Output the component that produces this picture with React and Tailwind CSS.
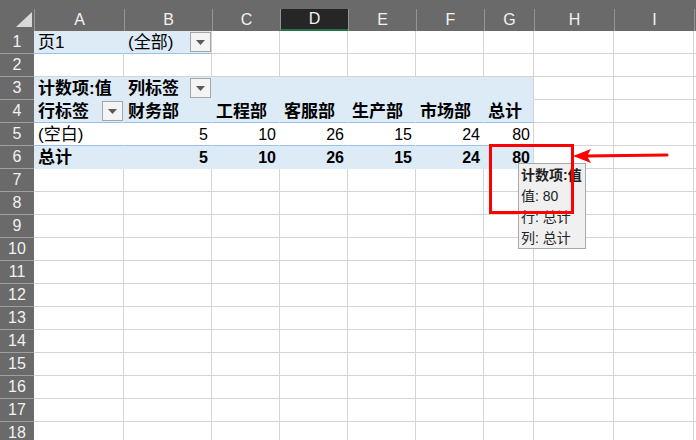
import React from "react";

// Columnas visibles de la hoja
const columns = ["A", "B", "C", "D", "E", "F", "G", "H", "I", ""];

const BG = { white: "bg-white", blue: "bg-[#ddebf7]" };
const RIGHT = { grid: "border-r-[#d4d4d4]", blue: "border-r-[#ddebf7]", white: "border-r-white" };
const BOTTOM = { grid: "border-b-[#d4d4d4]", line: "border-b-[#9bc2e6]", blue: "border-b-[#ddebf7]" };

// Contenido de la tabla dinámica
const cells = {
  "1-0": { text: "页1" },
  "1-1": { text: "(全部)", dropdown: true },
  "3-0": { text: "计数项:值", bold: true },
  "3-1": { text: "列标签", bold: true, dropdown: true },
  "4-0": { text: "行标签", bold: true, dropdown: true },
  "4-1": { text: "财务部", bold: true },
  "4-2": { text: "工程部", bold: true },
  "4-3": { text: "客服部", bold: true },
  "4-4": { text: "生产部", bold: true },
  "4-5": { text: "市场部", bold: true },
  "4-6": { text: "总计", bold: true },
  "5-0": { text: "(空白)" },
  "5-1": { text: "5", num: true },
  "5-2": { text: "10", num: true },
  "5-3": { text: "26", num: true },
  "5-4": { text: "15", num: true },
  "5-5": { text: "24", num: true },
  "5-6": { text: "80", num: true },
  "6-0": { text: "总计", bold: true },
  "6-1": { text: "5", num: true, bold: true },
  "6-2": { text: "10", num: true, bold: true },
  "6-3": { text: "26", num: true, bold: true },
  "6-4": { text: "15", num: true, bold: true },
  "6-5": { text: "24", num: true, bold: true },
  "6-6": { text: "80", num: true, bold: true },
};

// Estilo de fondo y bordes de cada celda
const cellLook = (r, c) => {
  if (r === 1 && c <= 1) return { bg: "blue", right: c === 0 ? "blue" : "grid", bottom: "line" };
  if (r >= 3 && r <= 6 && c <= 6) {
    const right = c === 6 ? "grid" : r === 5 ? "white" : "blue";
    if (r === 3) return { bg: "blue", right, bottom: "blue" };
    if (r === 4) return { bg: "blue", right, bottom: "line" };
    if (r === 5) return { bg: "white", right, bottom: "line" };
    return { bg: "blue", right, bottom: "blue" };
  }
  return { bg: "white", right: "grid", bottom: "grid" };
};

const Dropdown = () => (
  <div className="ml-auto self-start mt-[1px] w-[21px] h-[20px] shrink-0 border border-[#a6a6a6] bg-[#f4f4f4] flex items-center justify-center">
    <svg width="9" height="5" viewBox="0 0 9 5">
      <polygon points="0,0 9,0 4.5,5" fill="#595959" />
    </svg>
  </div>
);

const Cell = ({ r, c }) => {
  const look = cellLook(r, c);
  const data = cells[`${r}-${c}`];
  return (
    <div
      className={`h-[23px] flex items-center overflow-hidden whitespace-nowrap border-r border-b ${BG[look.bg]} ${RIGHT[look.right]} ${BOTTOM[look.bottom]}`}
    >
      {data && (
        <span
          className={`${data.num ? "ml-auto pr-[3px] text-[16px]" : "pl-[4px] text-[17px]"} ${
            data.bold ? "font-bold" : "font-normal"
          } text-black leading-[23px]`}
        >
          {data.text}
        </span>
      )}
      {data && data.dropdown && <Dropdown />}
    </div>
  );
};

const App = () => {
  const rows = Array.from({ length: 18 }, (_, i) => i + 1);

  return (
    <div className="relative w-[696px] h-[440px] overflow-hidden bg-white font-['Liberation_Sans','Noto_Sans_CJK_SC',sans-serif]">
      <div className="grid grid-cols-[34px_90px_88px_68px_68px_68px_68px_50px_80px_80px_80px] w-max">
        {/* Cabecera de columnas */}
        <div className="h-[31px] bg-[#6a6a6a] flex items-end justify-end pr-[2px] pb-[4px]">
          <svg width="16" height="15" viewBox="0 0 16 15">
            <polygon points="16,0 16,15 0,15" fill="#d9d9d9" />
          </svg>
        </div>
        {columns.map((col) => (
          <div key={col || "J"} className="h-[31px] bg-[#6a6a6a] flex items-end">
            <div
              className={`w-full h-[22px] border-l border-[#959595] flex items-center justify-center text-[16px] text-[#f2f2f2] ${
                col === "D" ? "bg-[#262626] border-b-2 border-b-[#217346]" : ""
              }`}
            >
              {col}
            </div>
          </div>
        ))}

        {/* Filas */}
        {rows.map((r) => (
          <React.Fragment key={r}>
            <div className="h-[23px] bg-[#6a6a6a] border-b border-[#a0a0a0] flex items-center justify-center text-[16px] text-[#f2f2f2]">
              {r}
            </div>
            {columns.map((col, c) => (
              <Cell key={c} r={r} c={c} />
            ))}
          </React.Fragment>
        ))}
      </div>

      {/* Información sobre herramientas */}
      <div className="absolute left-[518px] top-[163px] w-[68px] h-[86px] bg-[#f0f0f0] border border-[#a9a9a9] pl-[2px] pt-[1px] text-[14px] leading-[21px] text-[#222] font-['Liberation_Sans','Noto_Sans_CJK_SC',sans-serif] whitespace-nowrap overflow-hidden">
        <div className="font-bold">计数项:值</div>
        <div>值: 80</div>
        <div>行: 总计</div>
        <div>列: 总计</div>
      </div>

      {/* Marca roja */}
      <div className="absolute left-[489px] top-[144px] w-[85px] h-[70px] border-[3px] border-[#ff0000]" />
      <svg className="absolute left-[570px] top-[145px]" width="100" height="22" viewBox="0 0 100 22">
        <line x1="14" y1="11" x2="97" y2="10" stroke="#ff0000" strokeWidth="3" strokeLinecap="round" />
        <polygon points="3,11 21,4 17,11 21,18" fill="#ff0000" />
      </svg>
    </div>
  );
};

export default App;
